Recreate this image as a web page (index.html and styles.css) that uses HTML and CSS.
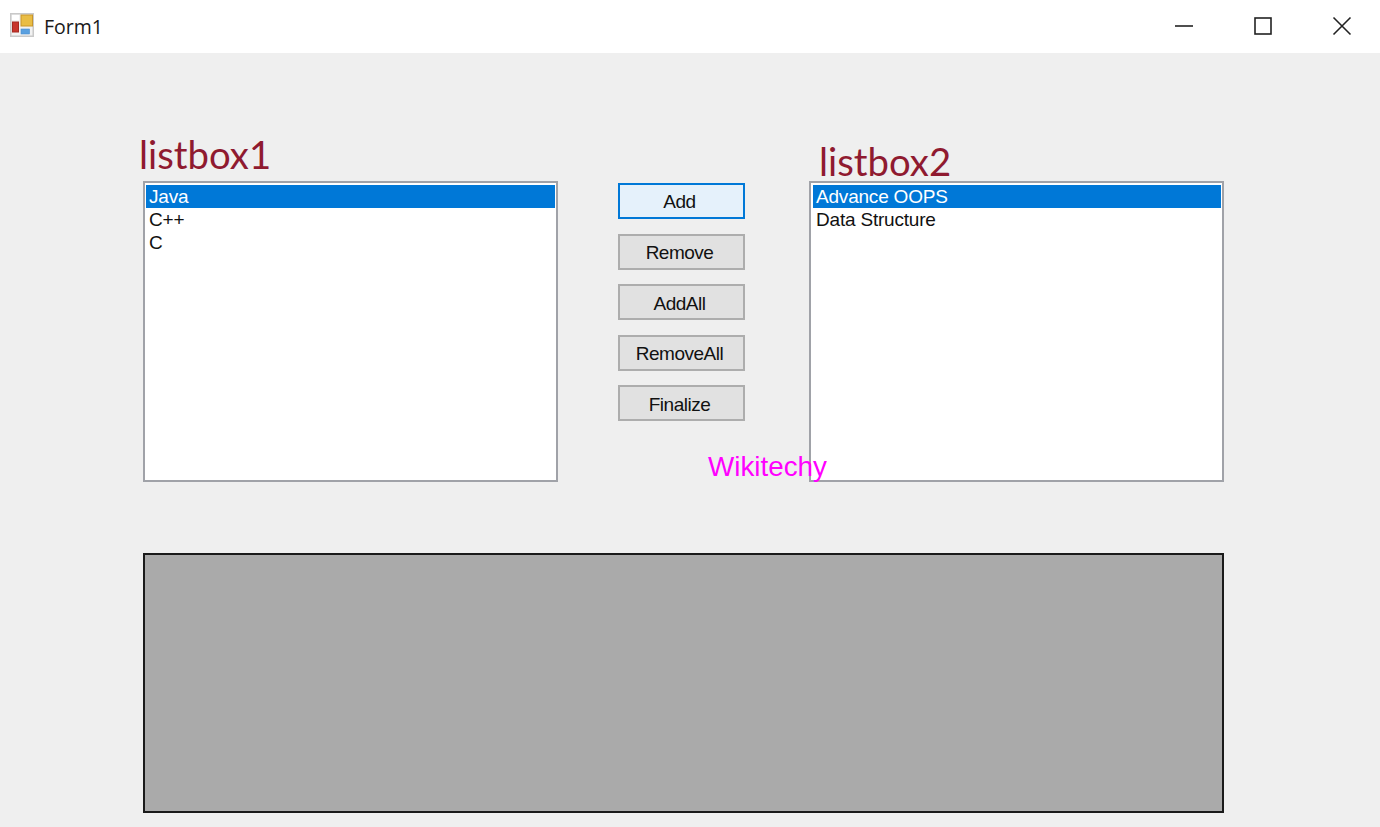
FILE: index.html
```html
<!DOCTYPE html>
<html lang="en">
<head>
    <meta charset="UTF-8">
    <title>Form1</title>
    <link rel="stylesheet" href="styles.css">
</head>
<body>
    <div class="titlebar">
        <svg class="app-icon" width="24" height="24" viewBox="0 0 24 24">
            <rect x="0" y="0" width="24" height="24" fill="#c9c9c9"/>
            <rect x="1.5" y="1.5" width="21" height="21" fill="#f2f2f2"/>
            <rect x="2" y="2" width="7" height="5" fill="#ffffff"/>
            <rect x="11" y="2" width="11.5" height="11" fill="#e9bd45" stroke="#c9962a"/>
            <rect x="2.5" y="9" width="6" height="10" fill="#c8352c" stroke="#a52a22"/>
            <rect x="11" y="16" width="8.5" height="5" fill="#5aa0e0" stroke="#4a8ccc" stroke-width="0.6"/>
        </svg>
        <span class="title">Form1</span>
        <div class="win-buttons">
            <svg width="20" height="20" viewBox="0 0 20 20"><path d="M1 10H19" stroke="#222" stroke-width="1.6" fill="none"/></svg>
            <svg width="20" height="20" viewBox="0 0 20 20"><rect x="2" y="2" width="16" height="16" stroke="#222" stroke-width="1.6" fill="none"/></svg>
            <svg width="20" height="20" viewBox="0 0 20 20"><path d="M1.5 1.5L18.5 18.5M18.5 1.5L1.5 18.5" stroke="#222" stroke-width="1.6" fill="none"/></svg>
        </div>
    </div>

    <div class="form">
        <div class="top-row">
            <div class="list-col">
                <div class="list-label label-one">listbox1</div>
                <div class="listbox">
                    <div class="item selected">Java</div>
                    <div class="item">C++</div>
                    <div class="item">C</div>
                </div>
            </div>

            <div class="buttons">
                <button class="btn focused">Add</button>
                <button class="btn">Remove</button>
                <button class="btn">AddAll</button>
                <button class="btn">RemoveAll</button>
                <button class="btn">Finalize</button>
            </div>

            <div class="list-col list-right">
                <div class="list-label label-two">listbox2</div>
                <div class="listbox">
                    <div class="item selected">Advance OOPS</div>
                    <div class="item">Data Structure</div>
                </div>
            </div>
            <div class="watermark">Wikitechy</div>
        </div>

        <div class="panel"></div>
    </div>
</body>
</html>
```

FILE: styles.css
```css
html, body {
    margin: 0;
    height: 100%;
}
body {
    width: 1380px;
    height: 827px;
    overflow: hidden;
    background-color: #efefef;
    font-family: "Liberation Sans", Arial, sans-serif;
    color: #111;
}
.titlebar {
    height: 53px;
    background: white;
    display: flex;
    align-items: center;
    padding-left: 10px;
    padding-bottom: 2px;
    box-sizing: border-box;
}
.app-icon {
    margin-top: -2px;
}
.title {
    font-family: "Open Sans", sans-serif;
    font-size: 19.5px;
    margin-left: 10px;
    margin-top: 1px;
    color: #1a1a1a;
}
.win-buttons {
    margin-left: auto;
    width: 206px;
    padding-right: 28px;
    box-sizing: border-box;
    display: flex;
    justify-content: space-between;
    margin-top: 1px;
}
.form {
    padding: 0 156px 0 143px;
}
.top-row {
    position: relative;
    display: flex;
    height: 429px;
    align-items: flex-end;
}
.list-col {
    width: 415px;
    flex: none;
}
.list-right {
    margin-left: 64px;
}
.list-label {
    font-family: Lato, sans-serif;
    font-size: 38.3px;
    line-height: 40px;
    color: #8f1a30;
}
.label-one {
    margin-left: -4px;
    margin-bottom: 7px;
}
.label-two {
    margin-left: 10px;
    margin-bottom: 0;
}
.listbox {
    height: 301px;
    box-sizing: border-box;
    border: 2px solid #a0a2a8;
    background: white;
    padding: 2px 1px;
    font-size: 19px;
}
.list-right .listbox {
    padding-left: 2px;
}
.item {
    height: 23px;
    line-height: 23px;
    padding-left: 3px;
    letter-spacing: -0.2px;
}
.item.selected {
    background: #0078d7;
    color: white;
}
.buttons {
    width: 127px;
    flex: none;
    margin-left: 60px;
    align-self: flex-end;
    padding-bottom: 61px;
    display: flex;
    flex-direction: column;
    gap: 14.4px;
}
.btn {
    height: 36px;
    width: 127px;
    padding: 3px 4px 0 0;
    box-sizing: border-box;
    border: 2px solid #adadad;
    background: #e1e1e1;
    font-family: "Liberation Sans", Arial, sans-serif;
    font-size: 19px;
    letter-spacing: -0.5px;
    color: #111;
}
.btn.focused {
    height: 36.6px;
    padding-top: 1px;
    border-color: #0078d7;
    background: #e5f1fb;
}
.watermark {
    position: absolute;
    left: 565px;
    top: 398px;
    font-size: 27.8px;
    line-height: 32px;
    color: #ff00ff;
}
.panel {
    margin-top: 71px;
    height: 260px;
    box-sizing: border-box;
    border: 2px solid #1a1a1a;
    background: #aaaaaa;
    width: 1081px;
}
```
